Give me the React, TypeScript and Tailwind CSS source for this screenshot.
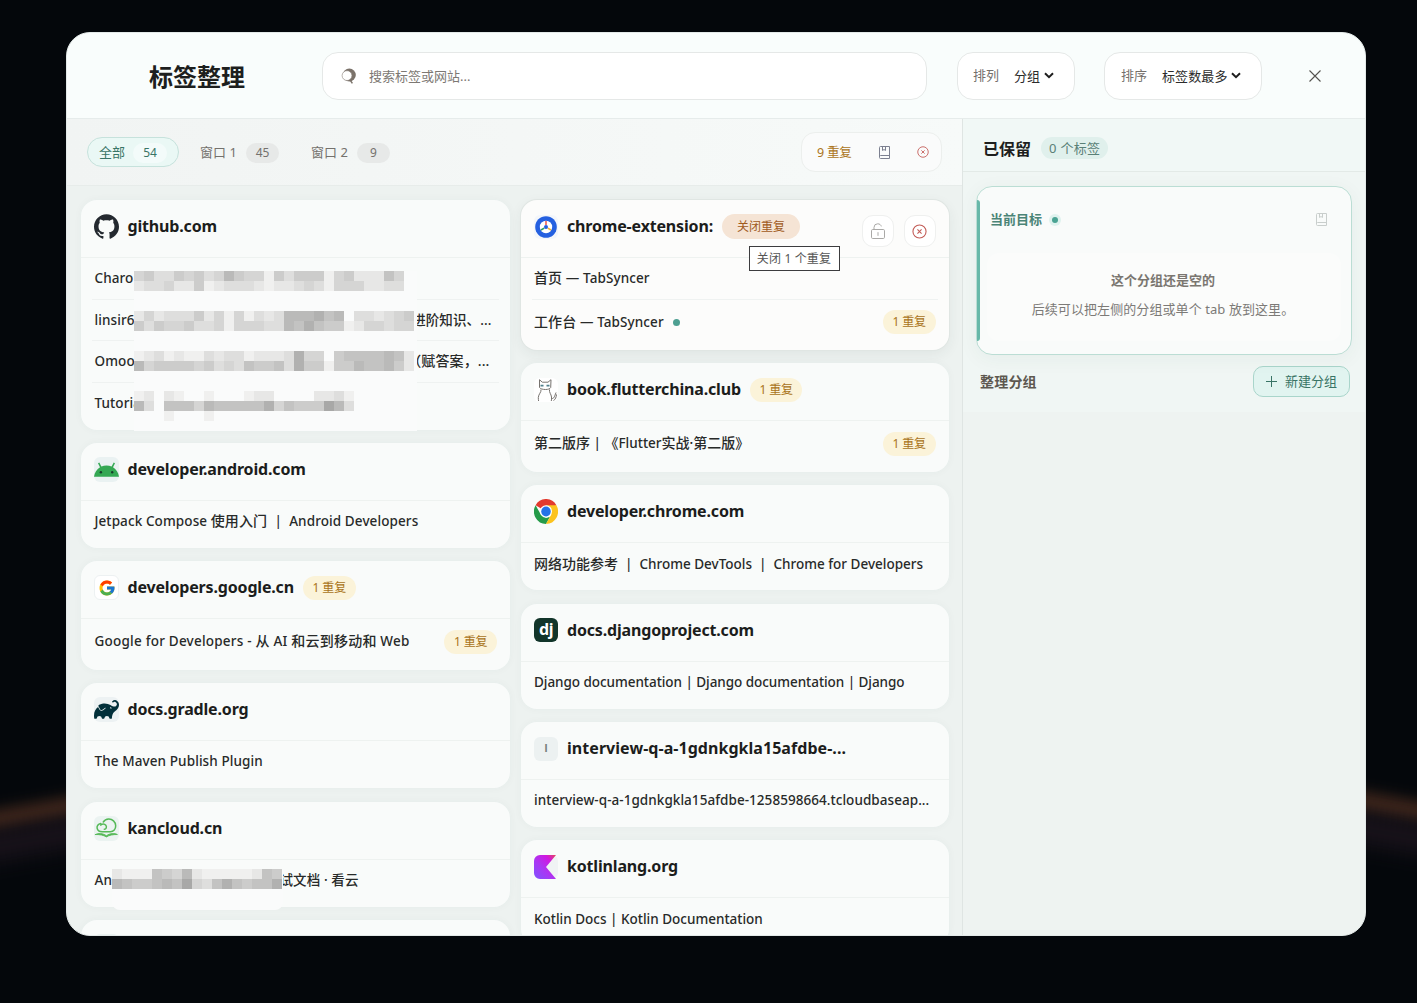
import type { ReactNode } from "react";
import { FcGoogle } from "react-icons/fc";
import { SiGithub, SiGradle } from "react-icons/si";

function Redacted({ rows }: { rows: string[] }) {
  return (
    <div>
      {rows.map((row, i) => (
        <div key={i} className="flex h-2.5">
          {row.split("").map((c, j) => (
            <span
              key={j}
              className="h-2.5 w-2.5 shrink-0"
              style={c === "0" ? undefined : { backgroundColor: `rgb(${249 - +c * 9},${249 - +c * 9},${248 - +c * 9})` }}
            />
          ))}
        </div>
      ))}
    </div>
  );
}

/* Sets Chinese runs slightly larger than the Latin text around them. */
function Mixed({ text }: { text: string }) {
  return (
    <>
      {text.split(/([\u3400-\u9fff\u3001-\u301f\uff00-\uffef]+)/).map((part, i) =>
        i % 2 ? <span key={i} className="text-[14px]">{part}</span> : part,
      )}
    </>
  );
}

function SearchIcon() {
  return (
    <svg width="16" height="18" viewBox="0 0 16 18">
      <circle cx="8.300" cy="8" r="6.500" fill="#7b726a" />
      <circle cx="6" cy="8.600" r="4.900" fill="#fff" stroke="#8a827b" strokeWidth=".6" />
      <path d="M9 12.800l2.400 3.600" stroke="#7b726a" strokeWidth="1.500" />
    </svg>
  );
}

function Caret() {
  return (
    <svg width="10" height="7" viewBox="0 0 10 7" fill="none">
      <path d="M1 1.200l4 4 4-4" stroke="#1f1f1f" strokeWidth="2" />
    </svg>
  );
}

function BookIcon({ color }: { color: string }) {
  return (
    <svg width="11" height="13" viewBox="0 0 11 13" fill="none" stroke={color} strokeWidth="1">
      <path d="M1.500.5h9v12h-9a1 1 0 0 1-1-1v-10a1 1 0 0 1 1-1zM.5 11a1 1 0 0 1 1-1.500h9M3.500.5v4l1.500-1 1.500 1v-4" />
    </svg>
  );
}

function CircleX({ size }: { size: number }) {
  return (
    <svg width={size} height={size} viewBox="0 0 16 16" fill="none" stroke="#c25a55" strokeWidth="1.150">
      <circle cx="8" cy="8" r="7" />
      <path d="M5.800 5.800l4.400 4.400M10.200 5.800l-4.400 4.400" />
    </svg>
  );
}

function UnlockIcon() {
  return (
    <svg width="14" height="16" viewBox="0 0 14 16" fill="none" stroke="#aaa9a7" strokeWidth="1">
      <rect x=".5" y="6.500" width="13" height="9" rx="1.200" />
      <path d="M3 6.500V4.400A3.700 3.700 0 0 1 6.700.8c1.900 0 3.200 1 3.600 2.600M7 9.200v3.600" />
    </svg>
  );
}

function AndroidIcon() {
  return (
    <svg width="25" height="25" viewBox="0 0 25 25">
      <rect width="25" height="25" rx="6" fill="#eaf2f2" />
      <path d="M0 19.800C.5 15.600 2.800 12.200 6 10.300L4 6.300l1.300-.7 2.100 4c1.500-.7 3.300-1 5.100-1s3.600.3 5.100 1l2.100-4 1.300.7-2 4c3.200 1.900 5.500 5.300 6 9.500z" fill="#34a853" />
      <circle cx="6.900" cy="15.300" r="1.200" fill="#173d2a" />
      <circle cx="18.200" cy="15.300" r="1.200" fill="#173d2a" />
    </svg>
  );
}

function KancloudIcon() {
  return (
    <svg width="25" height="25" viewBox="0 0 25 25" fill="none" stroke="#55b957" strokeLinecap="round">
      <rect width="25" height="25" rx="6" fill="#ebf3f1" stroke="none" />
      <path d="M6.800 9.200c1-1.500 3.600-1.800 5 0 1.300 1.900.3 4-1.500 4.100M6.800 7.500C4 8 2.700 10 3.100 12.200c.4 2.400 2.400 3.600 5.200 3.600h8c3.300 0 5.500-2.500 5.400-6-.1-4.100-3.400-6.800-7-6.700-2.400.1-4.300 1.100-5.400 2.900" strokeWidth="1.500" />
      <path d="M1.500 18.500c3-1.500 7-1.400 10.900 1.200 3.900-2.600 8-2.700 11-1.200-4-.1-8.200.6-11 2.400-2.800-1.800-6.900-2.500-10.900-2.400z" fill="#55b957" strokeWidth=".9" />
    </svg>
  );
}

function ExtensionIcon() {
  return (
    <svg width="24" height="24" viewBox="0 0 24 24">
      <rect width="24" height="24" rx="6" fill="#f3f6fb" />
      <circle cx="12" cy="12" r="10.800" fill="#2560e0" />
      <circle cx="12" cy="12" r="6.200" fill="#fff" />
      <path d="M12 6v4" stroke="#ea5548" strokeWidth="1.500" />
      <path d="M7 15l3.200-1.900" stroke="#2f9e58" strokeWidth="1.500" />
      <path d="M17 15l-3.200-1.900" stroke="#f2b632" strokeWidth="1.500" />
      <circle cx="12" cy="12" r="2" fill="#2560e0" />
    </svg>
  );
}

function CatIcon() {
  return (
    <svg width="24" height="24" viewBox="0 0 24 24" fill="none" stroke="#77736f" strokeWidth="1">
      <rect width="24" height="24" rx="6" fill="#fff" stroke="none" />
      <path d="M5.500 9.500V1.700l2.800 2.500h5.700l3-2.500-.3 7.800c-.8 1.300-2.500 2-5.200 2s-5.200-.7-6-2z" />
      <path d="M7 11.500c.5 2.800-2.500 4.500-2.700 8 0 1.500.1 2.600.3 3.500M15.500 11.500c-.5 3 1.700 4.600 2 7.500.2 1.500 0 2.800-.2 4M17.500 20.500c2.500.5 3-2 4.500-6M19.500 22.500c2-1 2.800-3.500 3-6" />
      <path d="M6.500 7.600h3M12.500 7.600h3" stroke="#50808c" strokeWidth="1.900" />
    </svg>
  );
}

function ChromeIcon() {
  return (
    <svg width="24" height="25" viewBox="0 0 48 48" preserveAspectRatio="none">
      <path d="M24 24L3.200 12A24 24 0 0 1 44.800 12z" fill="#e23a2e" />
      <path d="M3.200 12l10.400 18L24 36l8-2-8 14A24 24 0 0 1 3.200 12z" fill="#259b49" />
      <path d="M34.400 30L24 48A24 24 0 0 0 44.800 12H24z" fill="#fcc31e" />
      <circle cx="24" cy="24" r="12" fill="#fff" />
      <circle cx="24" cy="24" r="9.500" fill="#2472e8" />
    </svg>
  );
}

function KotlinIcon() {
  return (
    <svg width="24" height="24" viewBox="0 0 24 24">
      <defs>
        <linearGradient id="kt" x1="1" y1="0" x2="0" y2="1">
          <stop offset="0" stopColor="#e44857" />
          <stop offset=".25" stopColor="#d018e0" />
          <stop offset=".6" stopColor="#a838f4" />
          <stop offset="1" stopColor="#7f52ff" />
        </linearGradient>
      </defs>
      <rect width="24" height="24" rx="6" fill="#f0f3f4" />
      <path d="M6 0h16L12 12l10 12H6a6 6 0 0 1-6-6V6a6 6 0 0 1 6-6z" fill="url(#kt)" />
    </svg>
  );
}

function Dup() {
  return (
    <span className="shrink-0 rounded-full bg-[#fbf3d9] px-[9.500px] text-[12px] leading-[24px] tracking-[-0.1px] text-[#a9741a]">
      1 重复
    </span>
  );
}

type Row = { text: ReactNode; dup?: boolean; dot?: boolean; track?: string };

function Card({ icon, name, track = "tracking-[-0.170px]", extra, rows, hot, children }: {
  icon: ReactNode; name: string; track?: string; extra?: ReactNode; rows: Row[]; hot?: boolean; children?: ReactNode;
}) {
  return (
    <section
      className={
        hot
          ? "relative shrink-0 rounded-2xl bg-[#fcfcfb] shadow-[0_0_0_1px_#e0e6e3,0_4px_14px_rgba(40,60,55,0.07)]"
          : "relative shrink-0 rounded-2xl bg-[#f9fbfa] shadow-[0_0_8px_rgba(60,80,75,0.04)]"
      }
    >
      <header className="flex h-[58px] items-start border-b border-[#eef2f0] px-[13px] pt-[14px]">
        <span className="flex size-[25px] shrink-0 items-center justify-center">{icon}</span>
        <h2 className={`ml-2 whitespace-nowrap pl-[0.500px] text-[16px] font-bold leading-[25px] text-[#1c1d1c] ${track}`}>{name}</h2>
        {extra}
      </header>
      <div className="px-[11px] pb-[5.500px]">
        {rows.map((r, i) => (
          <div
            key={i}
            className={`flex items-center border-[#eff2f1] pl-[2.500px] pr-0.5 ${r.dup ? "h-[45px]" : "h-[41.500px]"} ${i < rows.length - 1 ? "border-b" : ""}`}
          >
            <span className={`whitespace-pre text-[13.500px] font-medium leading-5 text-[#282a29] ${rows.length === 1 ? "pb-px" : ""} ${r.track ?? "tracking-[0.100px]"}`}>
              {typeof r.text === "string" ? <Mixed text={r.text} /> : r.text}
            </span>
            {r.dot && <i className="ml-[9px] size-[7px] rounded-full bg-[#4d9f91]" />}
            {r.dup && <span className="ml-auto flex"><Dup /></span>}
          </div>
        ))}
      </div>
      {children}
    </section>
  );
}

function Toolbar() {
  return (
    <div className="flex h-[67px] items-center border-b border-[#e7ecea] bg-gradient-to-r from-[#f1f4f3] to-[#f7faf9] pl-5 pr-5 text-[13px]">
      <div className="flex gap-2">
        <div className="flex h-[30px] w-[92px] items-center gap-2 rounded-full border border-[#c6e2dc] bg-[#eaf8f5] pl-[11px] pt-px text-[#397466]">
          全部<span className="w-[34px] rounded-full bg-[#f3fbfa] text-center text-[12px] leading-5">54</span>
        </div>
        <div className="flex h-[30px] w-[104px] items-center justify-between pl-[13px] pr-3 pt-px text-[#74716d]">
          窗口 1<span className="w-[33px] rounded-full bg-[#e7e9e8] text-center text-[12px] leading-5">45</span>
        </div>
        <div className="flex h-[30px] w-[103px] items-center justify-between pl-[12px] pr-3 pt-px text-[#74716d]">
          窗口 2<span className="w-[33px] rounded-full bg-[#e7e9e8] text-center text-[12px] leading-5">9</span>
        </div>
      </div>
      <div className="ml-auto flex h-10 w-[141px] items-center rounded-[14px] border border-[#ecefed] bg-[#fafbfb] pl-[15px] text-[12.500px] tracking-[-0.2px] text-[#ac7622]">
        <span className="w-[35px] whitespace-nowrap pt-0.5">9 重复</span>
        <span className="ml-[27px]"><BookIcon color="#7c8090" /></span>
        <span className="ml-[26.500px]"><CircleX size={12} /></span>
      </div>
    </div>
  );
}

function Sidebar() {
  return (
    <aside className="flex flex-1 flex-col border-l border-[#dfe5e3] bg-[#eef3f1]">
      <div className="flex h-[53px] items-center border-b border-[#e3eae7] bg-[#f1f8f6] pl-5 pt-[5px]">
        <h2 className="pt-0.5 text-[16px] font-bold text-[#1e1f1e]">已保留</h2>
        <span className="ml-[10px] rounded-full bg-[#e0f0ec] px-2 text-[13px] leading-[22px] tracking-[0.300px] text-[#5a8077]">0 个标签</span>
      </div>
      <div className="bg-[#f0f6f4] pb-[15px] pl-[13px] pr-[13px] pt-[14px]">
        <div className="relative h-[169px] rounded-2xl border border-[#bbddd4] bg-[#f9fbfa] shadow-[0_4px_20px_rgba(40,70,60,0.05)]">
          <i className="absolute left-0 top-[13px] h-[141px] w-[3px] rounded-r-sm bg-[#67b8a9]" />
          <div className="flex h-[66px] items-center pl-[13px] text-[13px] font-semibold text-[#4b8477]">
            当前目标
            <span className="ml-[6.500px] flex size-3 items-center justify-center rounded-full bg-[#dff2ee]">
              <i className="size-1.5 rounded-full bg-[#4aa393]" />
            </span>
            <span className="ml-auto mr-6 pb-0.5"><BookIcon color="#c9cecc" /></span>
          </div>
          <div className="mx-[10px] flex h-[88px] flex-col items-center rounded-xl bg-[#fbfcfb] pr-0.5 pt-[17px] text-[13px] text-[#7a7670]">
            <b className="font-semibold leading-5">这个分组还是空的</b>
            <span className="mt-[9px] leading-5 tracking-[0.080px] text-[#7c7a77]">后续可以把左侧的分组或单个 tab 放到这里。</span>
          </div>
        </div>
        <div className="mt-[11px] flex h-[31px] items-center justify-between pl-1 pr-0.5">
          <b className="text-[14px] font-semibold tracking-[0.200px] text-[#5d5850]">整理分组</b>
          <button className="flex h-[31px] w-[97px] items-center justify-center gap-[7px] rounded-[10px] border border-[#a9d5cb] bg-[#e1f4f0] text-[13px] text-[#397466]">
            <svg width="12" height="12" viewBox="0 0 12 12"><path d="M5.500 0v11M0 5.500h11" stroke="#397466" /></svg>
            新建分组
          </button>
        </div>
      </div>
    </aside>
  );
}

const githubMosaic = [
  "453354534754415355514522264",
  "233422512333212234314442233",
  "", "",
  "2423335241413237778670332345",
  "5354453341444337686551244344",
  "", "",
  "1231211323312223844056666762",
  "7455554534365563855155766752",
  "", "",
  "1202100100012200002231",
  "7306664766666846555973",
  "0001000100000000000000",
];

export default function App() {
  return (
    <div className="relative h-[1003px] w-[1417px] overflow-hidden bg-[#04070b] px-[66px] pt-8 font-['Noto_Sans','Noto_Sans_CJK_SC',sans-serif]">
      <i className="absolute -left-10 top-[804px] h-[20px] w-[140px] -rotate-[10deg] bg-[#3f261b] blur-[7px]" />
      <i className="absolute -left-10 top-[825px] h-[30px] w-[140px] -rotate-[10deg] bg-[#18121a] blur-[10px]" />
      <i className="absolute -right-10 top-[796px] h-[20px] w-[140px] rotate-[10deg] bg-[#3f261b] blur-[7px]" />
      <i className="absolute -right-10 top-[818px] h-[30px] w-[140px] rotate-[10deg] bg-[#18121a] blur-[10px]" />
      <main className="relative flex h-[904px] w-[1300px] flex-col overflow-hidden rounded-[24px] border border-[#e3e9e8] bg-[#edf2f0]">
        <header className="flex h-[86px] shrink-0 items-center border-b border-[#e6eceb] bg-[#f9fdfc] pl-[82px]">
          <h1 className="w-[173px] pt-0.5 text-[24px] font-bold text-[#1d1f1e]">标签整理</h1>
          <div className="flex h-12 w-[605px] items-center rounded-2xl border border-[#e5e8e7] bg-white pl-[18px] text-[13px] text-[#7d7873]">
            <SearchIcon />
            <span className="ml-3 pt-0.5">搜索标签或网站...</span>
          </div>
          <div className="ml-[30px] flex h-12 w-[118px] items-center rounded-2xl border border-[#e5e8e7] bg-white pl-[15px] text-[13px] text-[#74706b]">
            排列<span className="ml-[15px] mr-1 pt-[3px] text-[#2b2b2b]">分组</span><Caret />
          </div>
          <div className="ml-[29px] flex h-12 w-[158px] items-center rounded-2xl border border-[#e5e8e7] bg-white pl-4 text-[13px] text-[#74706b]">
            排序<span className="ml-[15px] mr-[3px] pt-[3px] tracking-[0.100px] text-[#2b2b2b]">标签数最多</span><Caret />
          </div>
          <svg className="ml-[47px]" width="12" height="12" viewBox="0 0 12 12"><path d="M.5.5l11 11M11.500.5l-11 11" stroke="#55534f" strokeWidth="1.100" /></svg>
        </header>
        <div className="flex min-h-0 flex-1">
          <div className="flex w-[895px] flex-col">
            <Toolbar />
            <div className="flex min-h-0 flex-1 gap-[10.500px] overflow-hidden pl-[14px] pt-[14px]">
              <div className="flex w-[429px] flex-col gap-[13.400px]">
                <Card
                  icon={<SiGithub size={25} color="#24292f" />}
                  name="github.com"
                  rows={[
                    { text: "Charo" },
                    { text: <span className="flex w-[397px] justify-between"><span>linsir6</span><span>进阶知识、...</span></span> },
                    { text: <span className="flex w-[395px] justify-between"><span>Omoo</span><span className="text-[14px]">（赋答案，...</span></span> },
                    { text: "Tutoria" },
                  ]}
                >
                  <div className="absolute left-[52.500px] top-[71px] h-[160px] w-[283px] bg-[#fafbfb]"><Redacted rows={githubMosaic} /></div>
                </Card>
                <Card icon={<AndroidIcon />} name="developer.android.com" rows={[{ text: "Jetpack Compose 使用入门  |  Android Developers" }]} />
                <Card
                  icon={<span className="flex size-[25px] items-center justify-center rounded-md border border-[#edf1f2] bg-white"><FcGoogle size={18} /></span>}
                  name="developers.google.cn"
                  extra={<span className="ml-[9px] flex pt-px"><Dup /></span>}
                  rows={[{ text: "Google for Developers - 从 AI 和云到移动和 Web", dup: true, track: "tracking-[0.220px]" }]}
                />
                <Card
                  icon={<span className="flex size-[25px] items-center justify-center rounded-md bg-[#edf2f3]"><SiGradle size={25} color="#02303a" /></span>}
                  name="docs.gradle.org"
                  rows={[{ text: "The Maven Publish Plugin" }]}
                />
                <Card
                  icon={<KancloudIcon />}
                  name="kancloud.cn"
                  rows={[{ text: <span className="flex w-[264px] justify-between"><span>An</span><span>试文档 · 看云</span></span> }]}
                >
                  <div className="absolute left-[31px] top-[67px] h-[41px] w-[171px] overflow-hidden rounded-b-lg bg-[#fafbfb]"><Redacted rows={["21116547211111265", "76556769436865668"]} /></div>
                </Card>
                <Card icon={<span className="size-[25px] rounded-md bg-[#ebf3f1]" />} name="" rows={[{ text: "" }]} />
              </div>
              <div className="flex w-[428px] flex-col gap-[13.400px]">
                <Card
                  hot
                  icon={<ExtensionIcon />}
                  name="chrome-extension:"
                  extra={
                    <>
                      <span className="ml-[9px] rounded-full bg-[#f5e4d5] px-[15px] text-[12px] leading-[25px] text-[#a05a1c]">关闭重复</span>
                      <span className="ml-auto mt-px flex size-8 items-center justify-center rounded-[11px] border border-[#eff0ef] bg-white"><UnlockIcon /></span>
                      <span className="ml-[10px] mt-px flex size-8 items-center justify-center rounded-[11px] border border-[#eff0ef] bg-white"><CircleX size={15} /></span>
                    </>
                  }
                  rows={[{ text: "首页 — TabSyncer" }, { text: "工作台 — TabSyncer", dot: true, dup: true }]}
                >
                  <span className="absolute left-[228.500px] top-[46px] flex h-[25px] w-[91px] items-center justify-center border border-[#3c3c3e] bg-white pr-px text-[12px] tracking-[0.150px] text-[#555]">关闭 1 个重复</span>
                </Card>
                <Card icon={<CatIcon />} name="book.flutterchina.club" extra={<span className="ml-[9px] flex pt-px"><Dup /></span>} rows={[{ text: "第二版序 | 《Flutter实战·第二版》", dup: true, track: "tracking-[0px]" }]} />
                <Card icon={<ChromeIcon />} name="developer.chrome.com" rows={[{ text: "网络功能参考  |  Chrome DevTools  |  Chrome for Developers", track: "tracking-[0px]" }]} />
                <Card
                  icon={<span className="flex size-6 items-center justify-center rounded-md bg-[#12352a] pb-0.5 text-[16px] font-bold tracking-[-0.5px] text-white">dj</span>}
                  name="docs.djangoproject.com"
                  rows={[{ text: "Django documentation | Django documentation | Django", track: "tracking-[-0.050px]" }]}
                />
                <Card
                  icon={<span className="flex size-6 items-center justify-center rounded-md bg-[#ecf1f1] font-['Liberation_Sans'] text-[11px] font-bold text-[#77807d]">I</span>}
                  name="interview-q-a-1gdnkgkla15afdbe-..."
                  track="tracking-[0.050px]"
                  rows={[{ text: "interview-q-a-1gdnkgkla15afdbe-1258598664.tcloudbaseap...", track: "tracking-[0.050px]" }]}
                />
                <Card icon={<KotlinIcon />} name="kotlinlang.org" rows={[{ text: "Kotlin Docs | Kotlin Documentation", track: "tracking-[0px]" }]} />
              </div>
            </div>
          </div>
          <Sidebar />
        </div>
      </main>
    </div>
  );
}
